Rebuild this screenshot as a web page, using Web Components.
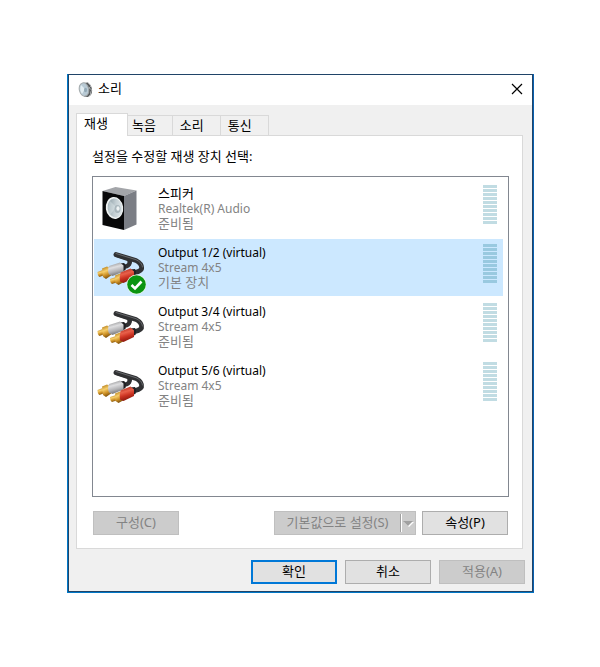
<!DOCTYPE html>
<html lang="ko">
<head>
<meta charset="utf-8">
<title>소리</title>
<style>
  body {
    margin: 0;
    padding: 74px 66px 74px 67px;
    background: #fff;
    color: #000;
    font: 13px/15px "Noto Sans", "Noto Sans CJK KR", sans-serif;
  }
</style>
</head>
<body>
<sound-dialog heading="소리">
  <tab-strip slot="content">
    <device-list></device-list>
  </tab-strip>
  <push-button slot="actions" variant="default">확인</push-button>
  <push-button slot="actions">취소</push-button>
  <push-button slot="actions" disabled>적용(A)</push-button>
</sound-dialog>

<script>
const define = (name, html, setup) => {
  const template = document.createElement('template');
  template.innerHTML = html;
  customElements.define(name, class extends HTMLElement {
    connectedCallback() {
      if (this.shadowRoot) return;
      this.attachShadow({ mode: 'open' }).append(template.content.cloneNode(true));
      if (setup) setup(this, this.shadowRoot);
    }
  });
};

define('push-button', `
  <style>
    :host { display: block; width: 86px; }
    button {
      box-sizing: border-box; width: 100%; height: 24px; padding: 0;
      border: 1px solid #adadad; background: #e1e1e1; color: #000; font: inherit;
      display: flex; align-items: center; justify-content: center;
    }
    :host([variant="default"]) button { border: 2px solid #0078d7; }
    :host([split]) { width: 142px; }
    span { flex: 1; text-align: center; padding-bottom: 2px; }
    svg { display: none; }
    :host([split]) svg { display: block; }
    button:disabled { background: #ccc; border-color: #bfbfbf; color: #838383; }
  </style>
  <button type="button"><span><slot></slot></span>
    <svg width="15" height="20" viewBox="0 0 15 20" aria-hidden="true">
      <path d="M.5 1v18" stroke="#a0a0a0"/><path d="M1.5 1v18" stroke="#fff"/>
      <path d="M4 9h10l-5 5z" fill="#fff"/><path d="M3 8h10l-5 5z" fill="#a0a0a0"/>
    </svg>
  </button>`, (host, root) => {
  root.querySelector('button').disabled = host.hasAttribute('disabled');
});

define('level-meter', `
  <style>
    :host {
      display: block; width: 14px; height: 39px;
      background: repeating-linear-gradient(var(--meter, #c1dce3) 0 3px, transparent 3px 4px);
    }
  </style>`);

const cable = `
  <svg width="50" height="50" viewBox="0 0 50 50" aria-hidden="true">
    <defs>
      <linearGradient id="gold" x1=".3" y1="0" x2=".6" y2="1"><stop stop-color="#b88220"/><stop offset=".35" stop-color="#f6cf6c"/><stop offset=".65" stop-color="#cf9328"/><stop offset="1" stop-color="#6f4408"/></linearGradient>
      <linearGradient id="silver" x1=".3" y1="0" x2=".6" y2="1"><stop stop-color="#8c8c8e"/><stop offset=".35" stop-color="#dedee0"/><stop offset=".65" stop-color="#b2b2b5"/><stop offset="1" stop-color="#666668"/></linearGradient>
      <linearGradient id="red" x1=".3" y1="0" x2=".6" y2="1"><stop stop-color="#aa2719"/><stop offset=".35" stop-color="#e8604a"/><stop offset=".6" stop-color="#cc3322"/><stop offset="1" stop-color="#7c1209"/></linearGradient>
    </defs>
    <g fill="none" stroke-linecap="round" stroke-linejoin="round">
      <path d="M20 10 32 14Q35 16 33 19.500Q31 22 27 22" stroke="#303133" stroke-width="4.400"/>
      <path d="M20 9.500 40 15.500Q46.500 19 45.500 24Q43.500 27.500 36 27.500" stroke="#303133" stroke-width="4.800"/>
      <path d="M20 8.500 40 14.700Q46 17.500 46.500 22" stroke="#66686b" stroke-width="1"/>
    </g>
    <path d="m24 18.500 4-.5 2 2-.5 5-3 1.500z" fill="#202124"/>
    <path d="m34 24.500 5-.5 1 3-.5 4-4 1z" fill="#202124"/>
    <path d="m1.500 27 5-2 2 5-5 2q-2-1-2-5z" fill="url(#gold)"/>
    <path d="m6 23.500 5-2 4 2v7L10 34l-3-2z" fill="url(#gold)"/>
    <path d="m13 21 11-3.500 3.500 3v6l-11 4.500-3.500-1.500q-2-4 0-8.500" fill="url(#silver)"/>
    <path d="m14 34 6-2 2 5-6 2q-2-1-2-5" fill="url(#gold)"/>
    <path d="m19 30.500 5-2 3 2v7L22.500 40l-3-2z" fill="url(#gold)"/>
    <path d="m24.500 27.500 10-4 3.500 3v6.500l-10.500 5-3.500-1.500q-1-4 .5-9" fill="url(#red)"/>
    <g class="badge"><circle cx="40.500" cy="39.500" r="10" fill="#e9f5e9"/><circle cx="40.500" cy="39.500" r="9.300" fill="#0a9410"/><path d="m35.500 40 3.500 3.500 6.500-7" fill="none" stroke="#fff" stroke-width="2.600"/></g>
  </svg>`;

const speaker = `
  <svg width="50" height="50" viewBox="0 0 50 50" aria-hidden="true">
    <defs><linearGradient id="cone" x1="0" x2="1" y1=".3" y2=".7"><stop stop-color="#8fa0a8"/><stop offset=".5" stop-color="#c3ced3"/><stop offset="1" stop-color="#e3eaec"/></linearGradient></defs>
    <path d="M6.500 5 19.500 1l21 3.500L28 10z" fill="#a3a5a9"/>
    <path d="m28 10 12.500-5.500v34L28 44z" fill="#7b7e85"/>
    <path d="M6.500 5 28 10v34L6.500 39z" fill="#080809"/>
    <ellipse cx="18.500" cy="22" rx="8.700" ry="11" transform="rotate(-8 18.500 22)" fill="#eef1f1"/>
    <ellipse cx="19" cy="22" rx="7.300" ry="9.500" transform="rotate(-8 19 22)" fill="url(#cone)"/>
    <path d="m14 15 6 6-6 8q-4-7 0-14" fill="#edf5f6" opacity=".35"/>
    <ellipse cx="21.500" cy="23" rx="3" ry="4" fill="#a9b6bc"/><ellipse cx="22" cy="22.500" rx="1.600" ry="2.200" fill="#eef3f4"/>
  </svg>`;

define('device-row', `
  <style>
    :host {
      display: grid; grid-template-columns: 50px 1fr auto; column-gap: 12px;
      padding: 6px 6px 6px 2px; color: #838383; height: 45px;
    }
    :host([aria-selected="true"]) { background: #cce8ff; --meter: #99c9e0; }
    .name { color: #000; font-size: 12px; }
    :host([icon="speaker"]) .name { font-size: 13px; }
    .device { font-size: 12px; }
    .icon { height: 45px; overflow: visible; }
    svg { display: block; }
    .badge { display: none; }
    :host([aria-selected="true"]) .badge { display: block; }
    level-meter { margin-top: -1px; }
  </style>
  <div class="icon"></div>
  <div><div class="name"><slot></slot></div><div class="device"></div><div class="state"></div></div>
  <level-meter></level-meter>`, (host, root) => {
  root.querySelector('.icon').innerHTML = host.getAttribute('icon') === 'speaker' ? speaker : cable;
  root.querySelector('.device').textContent = host.getAttribute('device');
  root.querySelector('.state').textContent = host.getAttribute('state');
});

define('device-list', `
  <style>
    :host { display: block; padding: 13px 13px 13px 15px; }
    .prompt { line-height: 15px; }
    .list {
      display: flex; flex-direction: column; gap: 2px; min-height: 316px;
      margin-top: 12px; padding: 3px 5px 0 1px; border: 1px solid #828790; background: #fff;
    }
    .buttons { display: flex; gap: 6px; margin: 14px 1px 0; }
    .buttons :first-child { margin-right: auto; }
  </style>
  <div class="prompt" id="prompt">설정을 수정할 재생 장치 선택:</div>
  <div class="list" role="listbox" aria-labelledby="prompt" tabindex="0">
    <device-row role="option" icon="speaker" device="Realtek(R) Audio" state="준비됨">스피커</device-row>
    <device-row role="option" aria-selected="true" device="Stream 4x5" state="기본 장치">Output 1/2 (virtual)</device-row>
    <device-row role="option" device="Stream 4x5" state="준비됨">Output 3/4 (virtual)</device-row>
    <device-row role="option" device="Stream 4x5" state="준비됨">Output 5/6 (virtual)</device-row>
  </div>
  <div class="buttons">
    <push-button disabled>구성(C)</push-button>
    <push-button split disabled>기본값으로 설정(S)</push-button>
    <push-button>속성(P)</push-button>
  </div>`);

define('tab-strip', `
  <style>
    :host { display: block; }
    .tabs { display: flex; align-items: flex-end; height: 22px; }
    button {
      box-sizing: border-box; height: 20px; padding: 0 16px 0 7px;
      border: 1px solid #d9d9d9; border-width: 1px 1px 0 0;
      background: #f0f0f0; color: inherit; font: inherit;
    }
    button[aria-selected="true"] {
      height: 23px; margin-bottom: -1px; padding: 0 19px 3px 7px;
      border-left-width: 1px; background: #fff;
    }
    button:nth-child(2) { padding-left: 4px; }
    .panel { border: 1px solid #d9d9d9; background: #fff; }
  </style>
  <div class="tabs" role="tablist">
    <button type="button" role="tab" aria-selected="true">재생</button>
    <button type="button" role="tab">녹음</button>
    <button type="button" role="tab">소리</button>
    <button type="button" role="tab">통신</button>
  </div>
  <div class="panel" role="tabpanel"><slot></slot></div>`);

define('sound-dialog', `
  <style>
    :host {
      display: block; background: #f0f0f0;
      border: 1px solid #0078c8; border-top: 0; border-right-color: #0860b0;
    }
    .frame { border: 1px solid #204468; }
    header { display: flex; align-items: center; height: 30px; background: #fff; padding: 0 9px; }
    header svg { display: block; }
    h1 { flex: 1; margin: 0 0 3px 5px; font: inherit; }
    .close { margin: 0 0 2px; padding: 0; border: 0; background: none; }
    main { padding: 8px 9px 0 7px; }
    footer { display: flex; justify-content: flex-end; gap: 8px; padding: 11px 7px 7px; }
  </style>
  <div class="frame" role="dialog" aria-labelledby="title">
    <header>
      <svg width="15" height="16" viewBox="0 0 15 16" aria-hidden="true">
        <path d="M5 1 10 .5q4 3 4 8t-4 6.500L6 14.500z" fill="#54585a"/>
        <path d="m10 1 3 3-2 2 3 2-2 3 1 1-3 3" fill="none" stroke="#a5a7a8"/>
        <ellipse cx="6" cy="7.500" rx="4.700" ry="6.700" transform="rotate(-12 6 7.500)" fill="#b8cad5" stroke="#a3a9ab"/>
        <path d="m3 3 4 4-3 5Q1 8 3 3" fill="#e2edf2"/><ellipse cx="7.500" cy="8" rx="1.500" ry="2.200" fill="#93a9b6"/>
      </svg>
      <h1 id="title"></h1>
      <button class="close" type="button" aria-label="닫기"><svg width="12" height="12" viewBox="0 0 12 12"><path d="m1 1 10 10M11 1 1 11" stroke="#000" stroke-width="1.200"/></svg></button>
    </header>
    <main><slot name="content"></slot></main>
    <footer><slot name="actions"></slot></footer>
  </div>`, (host, root) => {
  root.querySelector('h1').textContent = host.getAttribute('heading');
});
</script>
</body>
</html>
